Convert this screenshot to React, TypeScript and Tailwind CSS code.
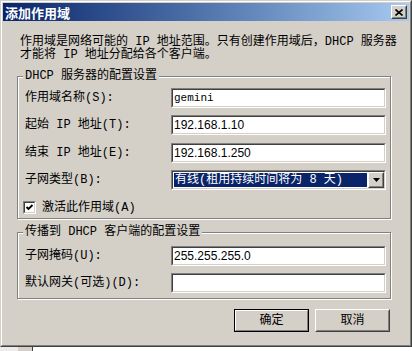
import React from "react";

const TXT = "font-['Liberation_Mono','Noto_Sans_CJK_SC',monospace] text-[12px] leading-[12px] text-black";
const NUM = "font-['Liberation_Sans',sans-serif] text-[12px] leading-[12px] text-black";

const Sunken = ({ className = "", children }: { className?: string; children?: React.ReactNode }) => (
  <div className={`border border-t-[#808080] border-l-[#808080] border-b-white border-r-white ${className}`}>
    <div className="flex h-full w-full items-center border border-t-[#404040] border-l-[#404040] border-b-[#d4d0c8] border-r-[#d4d0c8] bg-white">
      {children}
    </div>
  </div>
);

const Raised = ({ className = "", children }: { className?: string; children?: React.ReactNode }) => (
  <div className={`border border-t-white border-l-white border-b-[#404040] border-r-[#404040] bg-[#d4d0c8] ${className}`}>
    <div className="flex h-full w-full items-center justify-center border border-t-[#d4d0c8] border-l-[#d4d0c8] border-b-[#808080] border-r-[#808080]">
      {children}
    </div>
  </div>
);

const Row = ({ label, className = "", children }: { label: string; className?: string; children: React.ReactNode }) => (
  <div className={`flex h-[20px] items-center ${className}`}>
    <span className="w-[146px] whitespace-nowrap">{label}</span>
    {children}
  </div>
);

const Group = ({ legend, className = "", children }: { legend: string; className?: string; children: React.ReactNode }) => (
  <div
    className={`relative ml-[14px] w-[374px] border border-[#808080] pl-[7px] pr-[4px] shadow-[inset_1px_1px_0_#fff,1px_1px_0_#fff] ${className}`}
  >
    <span className="absolute left-[5px] top-[-7px] whitespace-nowrap bg-[#d4d0c8] px-[2px]">{legend}</span>
    {children}
  </div>
);

export default function App() {
  return (
    <div className={`flex h-[351px] w-[412px] flex-col overflow-hidden bg-[#d4d0c8] ${TXT}`}>
      <div className="h-[347px] w-[412px] border border-t-[#d4d0c8] border-l-[#d4d0c8] border-b-[#404040] border-r-[#404040]">
        <div className="flex h-full flex-col border border-t-white border-l-white border-b-[#808080] border-r-[#808080] p-[1px]">
          {/* title bar */}
          <div className="flex h-[18px] items-center justify-between bg-linear-to-r from-[#0a246a] to-[#a6caf0] pl-[2px] pr-[2px]">
            <span className="font-['Noto_Sans_CJK_SC',sans-serif] text-[13px] font-bold leading-[13px] text-white">
              添加作用域
            </span>
            <Raised className="h-[14px] w-[16px]">
              <svg width="8" height="7" viewBox="0 0 8 7">
                <path d="M0.5 0.5 L7.5 6.5 M7.5 0.5 L0.5 6.5" stroke="#000" strokeWidth="1.6" />
              </svg>
            </Raised>
          </div>

          <p className="mt-[15px] whitespace-nowrap pl-[17px] leading-[13px]">
            作用域是网络可能的 IP 地址范围。只有创建作用域后，DHCP 服务器
            <br />
            才能将 IP 地址分配给各个客户端。
          </p>

          <Group legend="DHCP 服务器的配置设置" className="mt-[14px] h-[143px] pt-[11px]">
            <Row label="作用域名称(S):">
              <Sunken className="h-[20px] w-[215px]">
                <span className="pl-[1px] text-[11px]">gemini</span>
              </Sunken>
            </Row>
            <Row label="起始 IP 地址(T):" className="mt-[7px]">
              <Sunken className="h-[20px] w-[215px]">
                <span className={`pl-[1px] ${NUM}`}>192.168.1.10</span>
              </Sunken>
            </Row>
            <Row label="结束 IP 地址(E):" className="mt-[8px]">
              <Sunken className="h-[20px] w-[215px]">
                <span className={`pl-[1px] ${NUM}`}>192.168.1.250</span>
              </Sunken>
            </Row>
            <Row label="子网类型(B):" className="mt-[7px]">
              <Sunken className="h-[20px] w-[215px]">
                <div className="flex h-full w-full items-stretch">
                  <div className="flex flex-1 items-stretch py-[1px] pl-[1px] pr-[1px]">
                    <div className="flex flex-1 items-center bg-[#0a246a] pl-[1px] whitespace-nowrap text-white">
                      有线(租用持续时间将为 8 天)
                    </div>
                  </div>
                  <Raised className="h-full w-[16px]">
                    <svg width="7" height="4" viewBox="0 0 7 4">
                      <polygon points="0,0 7,0 3.5,4" fill="#000" />
                    </svg>
                  </Raised>
                </div>
              </Sunken>
            </Row>
            <div className="mt-[11px] ml-[-2px] flex items-center gap-[6px]">
              <Sunken className="h-[13px] w-[13px]">
                <svg width="9" height="9" viewBox="0 0 9 9" className="mx-auto">
                  <polyline points="1.5,4 3.5,6 7.5,2" fill="none" stroke="#000" strokeWidth="1.9" />
                </svg>
              </Sunken>
              <span className="whitespace-nowrap">激活此作用域(A)</span>
            </div>
          </Group>

          <Group legend="传播到 DHCP 客户端的配置设置" className="mt-[13px] h-[67px] pt-[13px]">
            <Row label="子网掩码(U):">
              <Sunken className="h-[20px] w-[215px]">
                <span className={`pl-[1px] ${NUM}`}>255.255.255.0</span>
              </Sunken>
            </Row>
            <Row label="默认网关(可选)(D):" className="mt-[7px]">
              <Sunken className="h-[20px] w-[215px]" />
            </Row>
          </Group>

          <div className="mt-[10px] flex justify-end gap-[6px] pr-[19px]">
            <div className="h-[23px] w-[75px] border border-black">
              <div className="flex h-full w-full items-center justify-center border border-t-white border-l-white border-b-[#808080] border-r-[#808080]">
                确定
              </div>
            </div>
            <Raised className="h-[23px] w-[75px]">取消</Raised>
          </div>
        </div>
      </div>
      <div className="flex h-[4px]">
        <div className="w-[18px] bg-[#ececec]" />
        <div className="w-[14px] bg-[#d4d0c8]" />
        <div className="w-[1px] bg-[#404040]" />
        <div className="flex-1 bg-white" />
      </div>
    </div>
  );
}
